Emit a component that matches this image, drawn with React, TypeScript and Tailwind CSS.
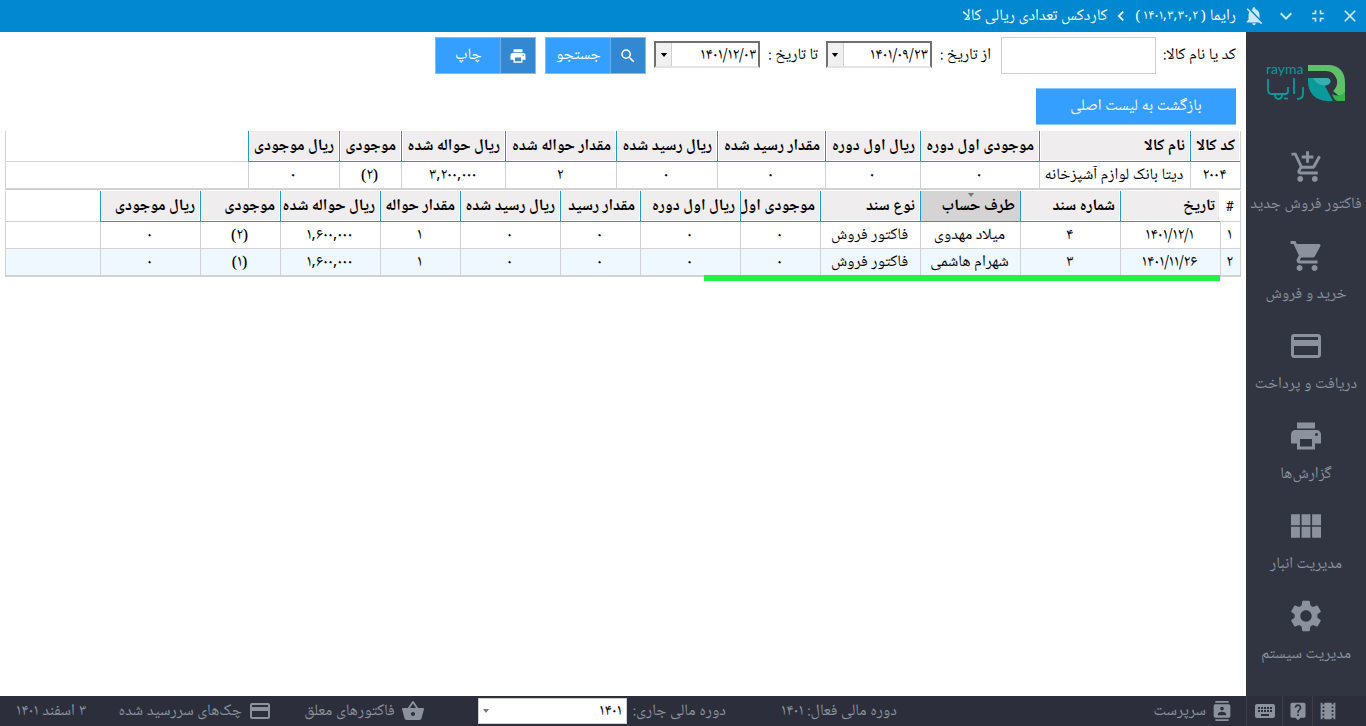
import React from "react";
import {
  MdAddShoppingCart,
  MdClose,
  MdContacts,
  MdCreditCard,
  MdFullscreenExit,
  MdKeyboard,
  MdKeyboardArrowDown,
  MdKeyboardArrowLeft,
  MdLiveHelp,
  MdNotificationsOff,
  MdPrint,
  MdSearch,
  MdSettings,
  MdShoppingBasket,
  MdShoppingCart,
  MdTheaters,
  MdViewModule,
} from "react-icons/md";
import type { IconType } from "react-icons";

const menu: { icon: IconType; label: string; size: number; viewBox?: string }[] = [
  { icon: MdAddShoppingCart, label: "فاکتور فروش جدید", size: 35, viewBox: "-0.7 -0.5 24 24" },
  { icon: MdShoppingCart, label: "خرید و فروش", size: 36, viewBox: "-0.7 0 24 24" },
  { icon: MdCreditCard, label: "دریافت و پرداخت", size: 36 },
  { icon: MdPrint, label: "گزارش‌ها", size: 36 },
  { icon: MdViewModule, label: "مدیریت انبار", size: 40 },
  { icon: MdSettings, label: "مدیریت سیستم", size: 38 },
];

const summaryColumns = [
  { title: "کد کالا", width: 50 },
  { title: "نام کالا", width: 151 },
  { title: "موجودی اول دوره", width: 119 },
  { title: "ریال اول دوره", width: 95 },
  { title: "مقدار رسید شده", width: 108 },
  { title: "ریال رسید شده", width: 101 },
  { title: "مقدار حواله شده", width: 111 },
  { title: "ریال حواله شده", width: 104 },
  { title: "موجودی", width: 62 },
  { title: "ریال موجودی", width: 91 },
];

const summaryRow = ["۲۰۰۴", "دیتا بانک لوازم آشپزخانه", "۰", "۰", "۰", "۰", "۲", "۳,۲۰۰,۰۰۰", "(۲)", "۰"];

const detailColumns = [
  { title: "تاریخ", width: 100 },
  { title: "شماره سند", width: 100 },
  { title: "طرف حساب", width: 100, sorted: true },
  { title: "نوع سند", width: 100 },
  { title: "موجودی اول", width: 80 },
  { title: "ریال اول دوره", width: 100 },
  { title: "مقدار رسید", width: 80 },
  { title: "ریال رسید شده", width: 100 },
  { title: "مقدار حواله", width: 80 },
  { title: "ریال حواله شده", width: 100 },
  { title: "موجودی", width: 80 },
  { title: "ریال موجودی", width: 100 },
];

const detailRows = [
  ["۱", "۱۴۰۱/۱۲/۱", "۴", "میلاد مهدوی", "فاکتور فروش", "۰", "۰", "۰", "۰", "۱", "۱,۶۰۰,۰۰۰", "(۲)", "۰"],
  ["۲", "۱۴۰۱/۱۱/۲۶", "۳", "شهرام هاشمی", "فاکتور فروش", "۰", "۰", "۰", "۰", "۱", "۱,۶۰۰,۰۰۰", "(۱)", "۰"],
];

function Logo() {
  return (
    <div className="flex w-20 items-start gap-0.5" dir="ltr">
      <div className="flex w-10 flex-col text-[#0b9a9b]">
        <span className="h-3 font-['Lato',sans-serif] text-sm leading-[10px]">rayma</span>
        <svg viewBox="0 0 40 28" className="h-7 w-10" fill="none" stroke="#0b9a9b" strokeWidth="1.8">
          <path d="M2 3V14Q2 18 6 18H19Q22 18 22 15V11M9 18Q9 23 12.5 23Q16 23 16 18M28 2V18M37 11V18Q37 23 31 23" />
          <path d="M18 22.5h4" />
        </svg>
      </div>
      <svg viewBox="0 0 38 38" className="h-[38px] w-[38px]">
        <path d="M0 1H20C31 1 37 8 37 18V37L25 27C29 24 31 17 27 12C25 8 21 7 17 7H0Z" fill="#5cc168" />
        <path d="M24 30Q31 34 37 28V37H29Q26 36 24 30Z" fill="#35b24a" />
        <path d="M0 14H18C24 14 24 21 17 22L25 37H20C8 37 0 29 0 18Z" fill="#0b9a9b" />
        <path d="M5 14H18C24 14 24 20 18 21C12 22 8 19 5 14Z" fill="#38aeb0" />
      </svg>
    </div>
  );
}

function DateSelect({ id, label, value }: { id: string; label: string; value: string }) {
  return (
    <div className="mb-0.5 flex items-center gap-2">
      <label htmlFor={id}>{label}</label>
      <div className="relative h-[27px] w-[106px]">
        <select
          id={id}
          className="h-full w-full appearance-none border-2 border-t-[#707070] border-r-[#707070] border-b-[#e3e3e3] border-l-[#707070] bg-white pr-0.5 pl-5"
        >
          <option>{value}</option>
        </select>
        <span className="pointer-events-none absolute top-0.5 bottom-0.5 left-0.5 flex w-4 items-center justify-center border-r border-[#d0d0d0] bg-[#f0f0f0]">
          <svg viewBox="0 0 8 5" className="h-1 w-2">
            <path d="M0 0H8L4 5Z" fill="#000" />
          </svg>
        </span>
      </div>
    </div>
  );
}

function ActionButton({ icon: Icon, label }: { icon: IconType; label: string }) {
  return (
    <button type="button" className="flex h-[37px] w-[101px] items-stretch border border-[#79bfff] bg-[#349fff] text-white">
      <span className="flex w-[35px] items-center justify-center border-l border-[#68b0f0] bg-[#3488d2]">
        <Icon size={18} />
      </span>
      <span className="flex grow items-center justify-center pb-0.5">{label}</span>
    </button>
  );
}

function HeadCell({ title, sorted }: { title: string; sorted?: boolean }) {
  return (
    <th
      scope="col"
      className={
        "relative h-[31px] overflow-hidden border-b border-l border-[#1f9ad6] pr-[5px] text-right font-bold whitespace-nowrap " +
        (sorted ? "bg-[#d5d3d4]" : "bg-[#efedee] shadow-[inset_-1px_0_0_#ffffff,inset_0_-1px_0_#ffffff,inset_1px_0_0_#ffffff]")
      }
    >
      {title}
      {sorted && (
        <svg viewBox="0 0 6 4" className="absolute top-0.5 left-1/2 h-1 w-1.5 -translate-x-1/2">
          <path d="M0 0H6L3 4Z" fill="#777" />
        </svg>
      )}
    </th>
  );
}

function BodyCell({ value }: { value: string }) {
  return (
    <td className="h-[27px] overflow-hidden border-b border-l border-[#d2d2d2] pr-0.5 pl-0 text-center whitespace-nowrap">
      {value}
    </td>
  );
}

function StatusLink({ icon: Icon, label }: { icon: IconType; label: string }) {
  return (
    <a href="#" className="flex items-center gap-1.5">
      <Icon size={24} />
      {label}
    </a>
  );
}

export default function App() {
  return (
    <div
      dir="rtl"
      lang="fa"
      className="flex min-h-screen flex-col bg-white font-['Noto_Naskh_Arabic_UI','Noto_Naskh_Arabic','Droid_Arabic_Naskh','DejaVu_Sans',sans-serif] text-base leading-5 text-black"
    >
      <header className="flex h-8 items-center bg-[#0288d1] pr-1.5 text-white/80">
        <button type="button" aria-label="بستن" className="flex w-8 justify-start">
          <MdClose size={20} />
        </button>
        <button type="button" aria-label="کوچک کردن" className="flex w-[30px] justify-start">
          <MdFullscreenExit size={20} />
        </button>
        <button type="button" aria-label="پایین" className="flex w-[33px] justify-start">
          <MdKeyboardArrowDown size={24} />
        </button>
        <button type="button" aria-label="اعلان‌ها" className="flex w-[29px] justify-start">
          <MdNotificationsOff size={22} />
        </button>
        <h1 className="flex items-center gap-1 whitespace-nowrap text-white">
          <span>رایما</span>
          <span className="text-sm">( ۱۴۰۱,۳,۳۰,۲ )</span>
          <MdKeyboardArrowLeft size={20} />
          <span>کاردکس تعدادی ریالی کالا</span>
        </h1>
      </header>

      <div className="flex grow">
        <aside className="flex w-[120px] shrink-0 flex-col bg-[#313541] text-[#8b929e]">
          <div className="flex h-[104px] items-center justify-center">
            <Logo />
          </div>
          <nav className="flex grow flex-col">
            {menu.map(({ icon: Icon, label, size, viewBox = "0 0 24 24" }) => (
              <a key={label} href="#" className="flex h-[90px] flex-col items-center pt-3 whitespace-nowrap">
                <span className="flex h-9 items-center">
                  <Icon size={size} viewBox={viewBox} />
                </span>
                <span className="mt-2.5">{label}</span>
              </a>
            ))}
          </nav>
          <div className="flex h-[30px] justify-end bg-[#2c2f3b]">
            <button type="button" aria-label="فیلم آموزشی" className="flex w-[30px] items-center justify-center border-l border-[#403f45]">
              <MdTheaters size={22} />
            </button>
            <button type="button" aria-label="راهنما" className="flex w-[30px] items-center justify-center border-l border-[#403f45]">
              <MdLiveHelp size={20} />
            </button>
            <button type="button" aria-label="صفحه کلید" className="flex w-[36px] items-center justify-center border-l border-[#403f45]">
              <MdKeyboard size={24} />
            </button>
          </div>
        </aside>

        <div className="flex min-w-0 grow flex-col">
          <main className="grow px-[5px] pt-[5px]">
            <form className="flex items-center px-[5px]">
              <label htmlFor="item" className="mb-0.5 ml-[7px]">کد یا نام کالا:</label>
              <input id="item" type="text" className="ml-2.5 h-[37px] w-[155px] border border-[#cfcfcf] px-2" />
              <DateSelect id="from" label="از تاریخ :" value="۱۴۰۱/۰۹/۲۳" />
              <span className="w-2" />
              <DateSelect id="to" label="تا تاریخ :" value="۱۴۰۱/۱۲/۰۳" />
              <span className="w-2" />
              <ActionButton icon={MdSearch} label="جستجو" />
              <span className="w-[9px]" />
              <ActionButton icon={MdPrint} label="چاپ" />
            </form>
            <button type="button" className="mt-3.5 mr-[5px] block h-[37px] w-[200px] border-y border-[#8cc8ff] bg-[#349fff] pb-0.5 text-white">
              بازگشت به لیست اصلی
            </button>

            <div className="mt-1.5 border-x border-b border-[#d2d2d2]">
              <table className="w-full table-fixed border-separate border-spacing-0">
                <colgroup>
                  {summaryColumns.map((c) => (
                    <col key={c.title} style={{ width: c.width }} />
                  ))}
                  <col />
                </colgroup>
                <thead>
                  <tr>
                    {summaryColumns.map((c) => (
                      <HeadCell key={c.title} title={c.title} />
                    ))}
                    <td className="border-b border-[#d2d2d2]" />
                  </tr>
                </thead>
                <tbody>
                  <tr>
                    {summaryRow.map((v, i) => (
                      <BodyCell key={i} value={v} />
                    ))}
                    <td className="border-b border-[#d2d2d2]" />
                  </tr>
                </tbody>
              </table>
            </div>

            <div className="mt-px border-x border-b border-[#d2d2d2]">
              <table className="w-full table-fixed border-separate border-spacing-0">
                <colgroup>
                  <col className="w-5" />
                  {detailColumns.map((c) => (
                    <col key={c.title} style={{ width: c.width }} />
                  ))}
                  <col />
                </colgroup>
                <thead>
                  <tr>
                    <th scope="col" className="border-b border-[#d2d2d2] text-sm font-bold">#</th>
                    {detailColumns.map((c) => (
                      <HeadCell key={c.title} title={c.title} sorted={c.sorted} />
                    ))}
                    <td className="border-b border-[#d2d2d2]" />
                  </tr>
                </thead>
                <tbody>
                  {detailRows.map((row) => (
                    <tr key={row[0]} className="even:bg-[#f0f8ff]">
                      {row.map((v, i) => (
                        <BodyCell key={i} value={v} />
                      ))}
                      <td className="border-b border-[#d2d2d2]" />
                    </tr>
                  ))}
                </tbody>
              </table>
            </div>
            <div className="relative -mt-0.5 mr-[21px] h-1.5 w-[516px] bg-[#20f246]" />
          </main>

          <footer className="flex h-[30px] items-center bg-[#2c2f3b] pr-3.5 pl-4 whitespace-nowrap text-[#8b929e]">
            <div className="flex w-[335px] items-center gap-1.5">
              <MdContacts size={20} />
              سرپرست
            </div>
            <div className="w-[171px]">دوره مالی فعال: ۱۴۰۱</div>
            <label htmlFor="period" className="ml-1.5">دوره مالی جاری:</label>
            <div className="relative h-[26px] w-[149px]">
              <select id="period" className="h-full w-full appearance-none border border-[#cfcfcf] bg-white pr-1 pl-4 text-black">
                <option>۱۴۰۱</option>
              </select>
              <svg viewBox="0 0 6 4" className="pointer-events-none absolute top-[11px] left-[5px] h-1 w-1.5">
                <path d="M0 0H6L3 4Z" fill="#777" />
              </svg>
            </div>
            <div className="flex grow items-center justify-between pr-[53px]">
              <StatusLink icon={MdShoppingBasket} label="فاکتورهای معلق" />
              <StatusLink icon={MdCreditCard} label="چک‌های سررسید شده" />
              <span>۳ اسفند ۱۴۰۱</span>
            </div>
          </footer>
        </div>
      </div>
    </div>
  );
}
